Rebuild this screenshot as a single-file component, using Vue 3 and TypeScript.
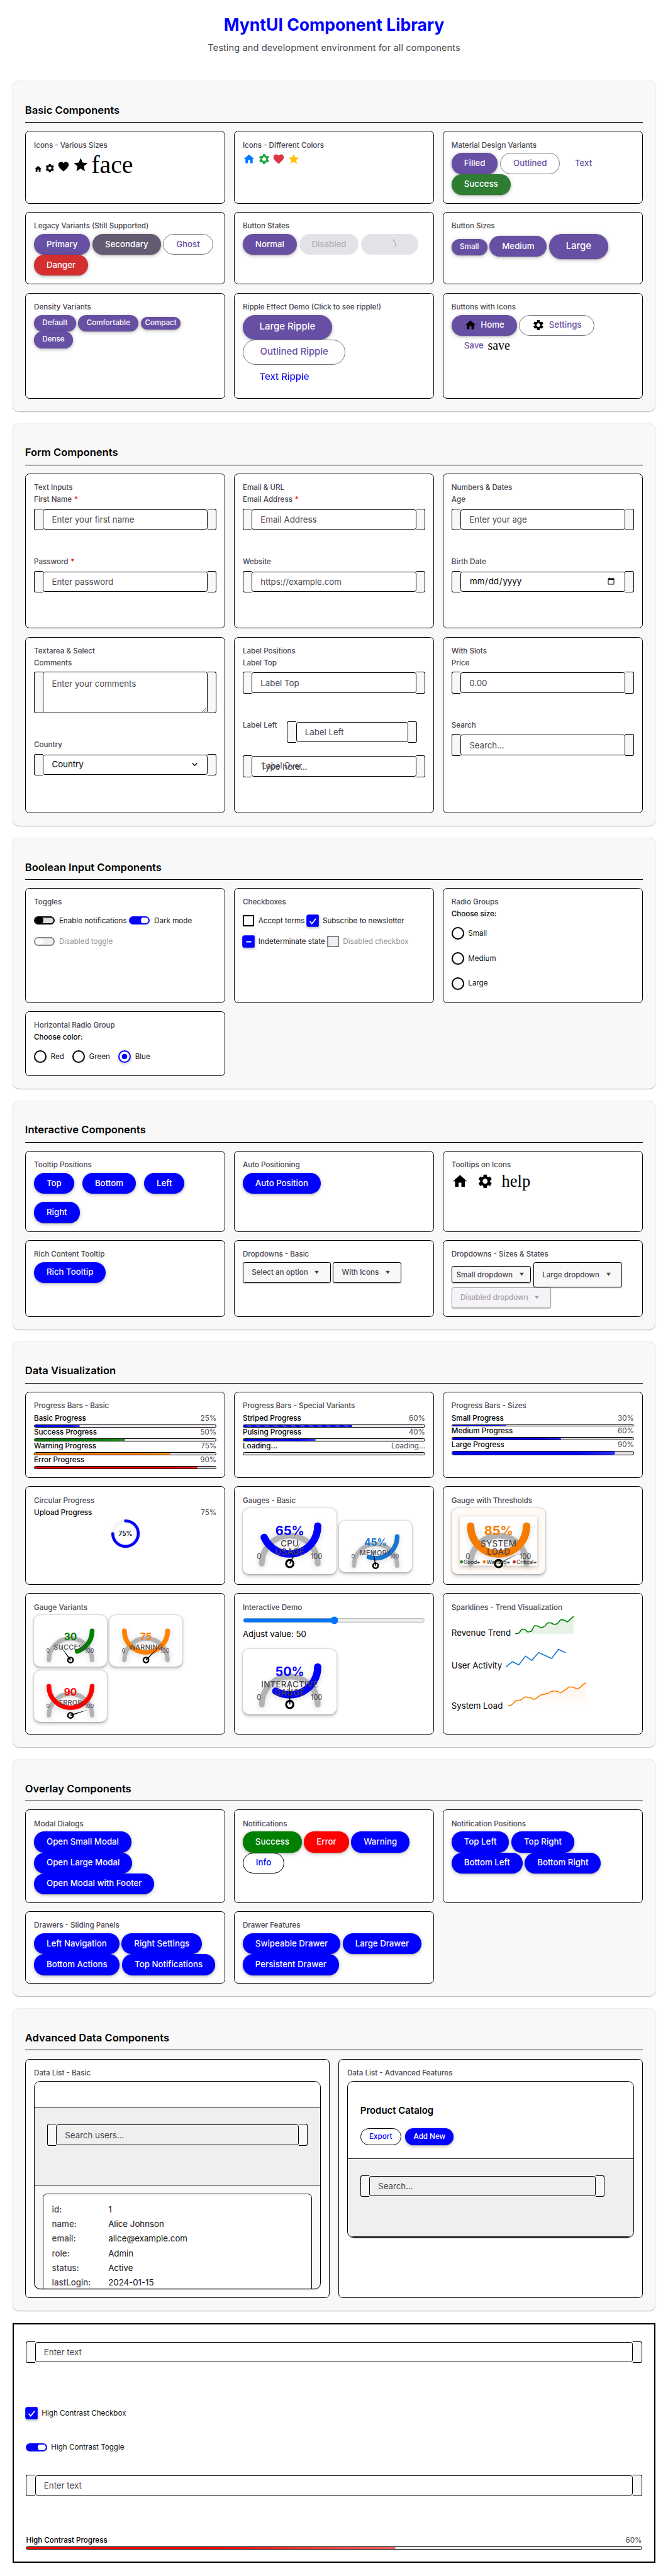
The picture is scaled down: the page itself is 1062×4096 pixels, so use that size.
<script setup lang="ts">
type Btn = { t: string; c?: string; s?: string; icon?: string; iconText?: string; spin?: boolean }
type Glyph = { n: string; s: number; c?: string; text?: boolean }
type Field = { label?: string; req?: boolean; ph?: string; kind?: string; mode?: string; over?: string }
type Check = { t: string; k: string; on?: boolean; mixed?: boolean; off?: boolean }
type Drop = { t: string; s?: string; off?: boolean }
type Bar = { t: string; v: string; w: number; c?: string; h?: number; striped?: boolean }
type Gauge = { lg?: boolean; pct: number; text: string; lines: string[]; c: string; legend?: boolean }
type Spark = { t: string; w: number; mt: number; h: number; c: string; pts: number[][]; fill?: string; curve?: boolean }
type Block = {
  glyphs?: Glyph[]; gap?: number; buttons?: Btn[][]; btnGap?: number; rowGap?: number; fields?: Field[]
  checks?: Check[][]; radios?: { legend: string; items: { t: string; on?: boolean }[]; row?: boolean }
  drops?: Drop[][]; bars?: Bar[]; ring?: number; gauges?: Gauge[][]; range?: number; sparks?: Spark[]
}
type Card = { title: string; blocks: Block[] }
type Section = { title: string; rows: number[]; cards: Card[] }

const paths: Record<string, string> = {
  home: 'M10 20v-6h4v6h5v-8h3L12 3 2 12h3v8z',
  settings:
    'M19.14 12.94c.04-.3.06-.61.06-.94 0-.32-.02-.64-.07-.94l2.03-1.58c.18-.14.23-.41.12-.61l-1.92-3.32c-.12-.22-.37-.29-.59-.22l-2.39.96c-.5-.38-1.03-.7-1.62-.94l-.36-2.54c-.04-.24-.24-.41-.48-.41h-3.84c-.24 0-.43.17-.47.41l-.36 2.54c-.59.24-1.13.57-1.62.94l-2.39-.96c-.22-.08-.47 0-.59.22L2.74 8.87c-.12.21-.08.47.12.61l2.03 1.58c-.05.3-.09.63-.09.94s.02.64.07.94l-2.03 1.58c-.18.14-.23.41-.12.61l1.92 3.32c.12.22.37.29.59.22l2.39-.96c.5.38 1.03.7 1.62.94l.36 2.54c.05.24.24.41.48.41h3.84c.24 0 .44-.17.47-.41l.36-2.54c.59-.24 1.13-.56 1.62-.94l2.39.96c.22.08.47 0 .59-.22l1.92-3.32c.12-.22.07-.47-.12-.61l-2.01-1.58zM12 15.6c-1.98 0-3.6-1.62-3.6-3.6s1.62-3.6 3.6-3.6 3.6 1.62 3.6 3.6-1.62 3.6-3.6 3.6z',
  heart:
    'M12 21.35l-1.45-1.32C5.4 15.36 2 12.28 2 8.5 2 5.42 4.42 3 7.5 3c1.74 0 3.41.81 4.5 2.09C13.09 3.81 14.76 3 16.5 3 19.58 3 22 5.42 22 8.5c0 3.78-3.4 6.86-8.55 11.54L12 21.35z',
  star: 'M12 17.27L18.18 21l-1.64-7.03L22 9.24l-7.19-.61L12 2 9.19 8.63 2 9.24l5.46 4.73L5.82 21z',
}

const sections: Section[] = [
  {
    title: 'Basic Components',
    rows: [139, 139, 203],
    cards: [
      { title: 'Icons - Various Sizes', blocks: [{ glyphs: [{ n: 'home', s: 16 }, { n: 'settings', s: 20 }, { n: 'heart', s: 24 }, { n: 'star', s: 32 }, { n: 'face', s: 48, text: true }] }] },
      { title: 'Icons - Different Colors', blocks: [{ glyphs: [{ n: 'home', s: 24, c: '#007bff' }, { n: 'settings', s: 24, c: '#28a745' }, { n: 'heart', s: 24, c: '#dc3545' }, { n: 'star', s: 24, c: '#ffc107' }] }] },
      { title: 'Material Design Variants', blocks: [{ buttons: [[{ t: 'Filled' }, { t: 'Outlined', c: 'outline' }, { t: 'Text', c: 'text' }], [{ t: 'Success', c: 'leaf' }]] }] },
      { title: 'Legacy Variants (Still Supported)', blocks: [{ buttons: [[{ t: 'Primary' }, { t: 'Secondary', c: 'slate' }, { t: 'Ghost', c: 'outline' }], [{ t: 'Danger', c: 'danger' }]] }] },
      { title: 'Button States', blocks: [{ buttons: [[{ t: 'Normal' }, { t: 'Disabled', c: 'off' }, { t: 'Loading', c: 'off', spin: true }]] }] },
      { title: 'Button Sizes', blocks: [{ buttons: [[{ t: 'Small', s: 'sm' }, { t: 'Medium' }, { t: 'Large', s: 'lg' }]] }] },
      { title: 'Density Variants', blocks: [{ buttons: [[{ t: 'Default', s: 'sm' }, { t: 'Comfortable', s: 'sm' }, { t: 'Compact', s: 'xs' }], [{ t: 'Dense', s: 'sm' }]] }] },
      { title: 'Ripple Effect Demo (Click to see ripple!)', blocks: [{ buttons: [[{ t: 'Large Ripple', s: 'lg' }], [{ t: 'Outlined Ripple', c: 'outline', s: 'lg' }], [{ t: 'Text Ripple', c: 'text fading', s: 'lg' }]] }] },
      { title: 'Buttons with Icons', blocks: [{ buttons: [[{ t: 'Home', icon: 'home' }, { t: 'Settings', c: 'outline', icon: 'settings' }], [{ t: 'Save', c: 'text', iconText: 'save' }]] }] },
    ],
  },
  {
    title: 'Form Components',
    rows: [297, 338],
    cards: [
      { title: 'Text Inputs', blocks: [{ fields: [{ label: 'First Name', req: true, ph: 'Enter your first name' }, { label: 'Password', req: true, ph: 'Enter password' }] }] },
      { title: 'Email & URL', blocks: [{ fields: [{ label: 'Email Address', req: true, ph: 'Email Address' }, { label: 'Website', ph: 'https://example.com' }] }] },
      { title: 'Numbers & Dates', blocks: [{ fields: [{ label: 'Age', ph: 'Enter your age' }, { label: 'Birth Date', kind: 'date' }] }] },
      { title: 'Textarea & Select', blocks: [{ fields: [{ label: 'Comments', ph: 'Enter your comments', kind: 'area' }, { label: 'Country', kind: 'select' }] }] },
      { title: 'Label Positions', blocks: [{ fields: [{ label: 'Label Top', ph: 'Label Top' }, { label: 'Label Left', ph: 'Label Left', mode: 'side' }, { ph: 'Type here...', over: 'Label Over' }] }] },
      { title: 'With Slots', blocks: [{ fields: [{ label: 'Price', ph: '0.00' }, { label: 'Search', ph: 'Search...' }] }] },
    ],
  },
  {
    title: 'Boolean Input Components',
    rows: [220, 124],
    cards: [
      { title: 'Toggles', blocks: [{ checks: [[{ k: 'toggle', t: 'Enable notifications' }, { k: 'toggle', t: 'Dark mode', on: true }], [{ k: 'toggle', t: 'Disabled toggle', off: true }]] }] },
      { title: 'Checkboxes', blocks: [{ checks: [[{ k: 'check', t: 'Accept terms' }, { k: 'check', t: 'Subscribe to newsletter', on: true }], [{ k: 'check', t: 'Indeterminate state', on: true, mixed: true }, { k: 'check', t: 'Disabled checkbox', off: true }]] }] },
      { title: 'Radio Groups', blocks: [{ radios: { legend: 'Choose size:', items: [{ t: 'Small' }, { t: 'Medium' }, { t: 'Large' }] } }] },
      { title: 'Horizontal Radio Group', blocks: [{ radios: { legend: 'Choose color:', row: true, items: [{ t: 'Red' }, { t: 'Green' }, { t: 'Blue', on: true }] } }] },
    ],
  },
  {
    title: 'Interactive Components',
    rows: [155, 147],
    cards: [
      { title: 'Tooltip Positions', blocks: [{ btnGap: 16, rowGap: 16, buttons: [[{ t: 'Top', c: 'blue' }, { t: 'Bottom', c: 'blue' }, { t: 'Left', c: 'blue' }], [{ t: 'Right', c: 'blue' }]] }] },
      { title: 'Auto Positioning', blocks: [{ buttons: [[{ t: 'Auto Position', c: 'blue' }]] }] },
      { title: 'Tooltips on Icons', blocks: [{ gap: 16, glyphs: [{ n: 'home', s: 32 }, { n: 'settings', s: 32 }, { n: 'help', s: 32, text: true }] }] },
      { title: 'Rich Content Tooltip', blocks: [{ buttons: [[{ t: 'Rich Tooltip', c: 'blue' }]] }] },
      { title: 'Dropdowns - Basic', blocks: [{ drops: [[{ t: 'Select an option' }, { t: 'With Icons' }]] }] },
      { title: 'Dropdowns - Sizes & States', blocks: [{ drops: [[{ t: 'Small dropdown', s: 'sm' }, { t: 'Large dropdown', s: 'lg' }], [{ t: 'Disabled dropdown', off: true }]] }] },
    ],
  },
  {
    title: 'Data Visualization',
    rows: [165.4, 189, 271],
    cards: [
      { title: 'Progress Bars - Basic', blocks: [{ bars: [{ t: 'Basic Progress', v: '25%', w: 25 }, { t: 'Success Progress', v: '50%', w: 50, c: 'green' }, { t: 'Warning Progress', v: '75%', w: 75, c: 'orange' }, { t: 'Error Progress', v: '90%', w: 90, c: 'red' }] }] },
      { title: 'Progress Bars - Special Variants', blocks: [{ bars: [{ t: 'Striped Progress', v: '60%', w: 60, striped: true }, { t: 'Pulsing Progress', v: '40%', w: 40 }, { t: 'Loading...', v: 'Loading...', w: 0 }] }] },
      { title: 'Progress Bars - Sizes', blocks: [{ bars: [{ t: 'Small Progress', v: '30%', w: 30, h: 4 }, { t: 'Medium Progress', v: '60%', w: 60 }, { t: 'Large Progress', v: '90%', w: 90, h: 8 }] }] },
      { title: 'Circular Progress', blocks: [{ ring: 75 }] },
      { title: 'Gauges - Basic', blocks: [{ gauges: [[{ lg: true, pct: 65, text: '65%', lines: ['CPU', 'USAGE'], c: '#0000ff' }, { pct: 45, text: '45%', lines: ['MEMORY'], c: '#1976d2' }]] }] },
      { title: 'Gauge with Thresholds', blocks: [{ gauges: [[{ lg: true, pct: 85, text: '85%', lines: ['SYSTEM', 'LOAD'], c: '#f57c00', legend: true }]] }] },
      { title: 'Gauge Variants', blocks: [{ gauges: [[{ pct: 30, text: '30', lines: ['SUCCESS'], c: '#008000' }, { pct: 75, text: '75', lines: ['WARNING'], c: '#ff8000' }], [{ pct: 90, text: '90', lines: ['ERROR'], c: '#ff0000' }]] }] },
      { title: 'Interactive Demo', blocks: [{ range: 50 }, { gauges: [[{ lg: true, pct: 50, text: '50%', lines: ['INTERACTIVE', 'GAUGE'], c: '#0000ff' }]] }] },
      {
        title: 'Sparklines - Trend Visualization',
        blocks: [{
          sparks: [
            { t: 'Revenue Trend', w: 121, mt: 22.3, h: 55, c: '#008000', fill: 'rgba(0,128,0,.1)', curve: true, pts: [[2, 36], [7, 35], [15, 27], [20, 28], [26, 32.5], [31, 31.5], [39, 20.5], [44, 21], [51.5, 24.5], [57, 22], [64, 15], [70, 15.2], [76, 18], [81, 17], [89, 9.2], [95.5, 9.6], [100.5, 13], [113, 3.5]] },
            { t: 'User Activity', w: 104, mt: 29.7, h: 65, c: '#1976d2', pts: [[1, 43.5], [13, 34], [25, 40], [38, 23.3], [50, 31.5], [63, 16.5], [76, 22.3], [88, 28], [101, 10.3], [114, 16.5]] },
            { t: 'System Load', w: 108, mt: 42.3, h: 85, c: '#ff8000', fill: 'url(#glow)', curve: true, pts: [[1, 53.3], [6, 52.3], [17, 43.3], [25, 42.3], [33, 36.7], [42, 37.3], [50, 41], [67, 31.7], [76, 30], [84, 25.7], [91, 25], [102, 28.3], [110, 23.3], [118, 17.3], [125, 17.7], [133, 21], [150, 10]] },
          ],
        }],
      },
    ],
  },
  {
    title: 'Overlay Components',
    rows: [179, 139],
    cards: [
      { title: 'Modal Dialogs', blocks: [{ buttons: [[{ t: 'Open Small Modal', c: 'blue' }], [{ t: 'Open Large Modal', c: 'blue' }], [{ t: 'Open Modal with Footer', c: 'blue' }]] }] },
      { title: 'Notifications', blocks: [{ buttons: [[{ t: 'Success', c: 'green' }, { t: 'Error', c: 'red' }, { t: 'Warning', c: 'blue' }], [{ t: 'Info', c: 'outline ink' }]] }] },
      { title: 'Notification Positions', blocks: [{ buttons: [[{ t: 'Top Left', c: 'blue' }, { t: 'Top Right', c: 'blue' }], [{ t: 'Bottom Left', c: 'blue' }, { t: 'Bottom Right', c: 'blue' }]] }] },
      { title: 'Drawers - Sliding Panels', blocks: [{ buttons: [[{ t: 'Left Navigation', c: 'blue' }, { t: 'Right Settings', c: 'blue' }], [{ t: 'Bottom Actions', c: 'blue' }, { t: 'Top Notifications', c: 'blue' }]] }] },
      { title: 'Drawer Features', blocks: [{ buttons: [[{ t: 'Swipeable Drawer', c: 'blue' }, { t: 'Large Drawer', c: 'blue' }], [{ t: 'Persistent Drawer', c: 'blue' }]] }] },
    ],
  },
]

const record: [string, string][] = [
  ['id', '1'], ['name', 'Alice Johnson'], ['email', 'alice@example.com'],
  ['role', 'Admin'], ['status', 'Active'], ['lastLogin', '2024-01-15'],
]

const large = { w: 180, h: 126.4, cx: 90, hub: 106.3, r: 53.6, sw: 11, vy: 34.3, vsw: 14, ty: 51.3, fs: 24, ly: [73.3, 89.3], lf: 16, ny: 97.8, n0: 31, n1: 141, nf: 13.5, hr: 7, hs: 3.8 }
const small = { w: 140, h: 98.4, cx: 70, hub: 86.2, r: 41.4, sw: 8.4, vy: 30.3, vsw: 9, ty: 48.8, fs: 18.7, ly: [66.5, 80], lf: 13, ny: 72.5, n0: 27, n1: 106, nf: 10.8, hr: 5, hs: 3 }
const dims = (g: Gauge) => (g.lg ? large : small)

function valueArc(g: Gauge): string {
  const d = dims(g)
  const a = (Math.min(180, g.pct * 2.4) * Math.PI) / 180
  return `M${d.cx + d.r} ${d.vy}A${d.r} ${d.r} 0 0 1 ${d.cx + d.r * Math.cos(a)} ${d.vy + d.r * Math.sin(a)}`
}
function baseArc(g: Gauge): string {
  const d = dims(g)
  return `M${d.cx - d.r} ${d.hub}A${d.r} ${d.r} 0 0 1 ${d.cx + d.r} ${d.hub}`
}
function line(s: Spark): string {
  if (!s.curve) return 'M' + s.pts.map((p) => p.join(' ')).join('L')
  let out = `M${s.pts[0].join(' ')}`
  for (let i = 1; i < s.pts.length; i++) {
    const [x0, y0] = s.pts[i - 1]
    const [x1, y1] = s.pts[i]
    const k = (x1 - x0) * 0.35
    out += `C${x0 + k} ${y0} ${x1 - k} ${y1} ${x1} ${y1}`
  }
  return out
}
function area(s: Spark): string {
  const base = s.fill === 'url(#glow)' ? 54 : 36
  return `${line(s)}V${base}H${s.pts[0][0]}Z`
}
</script>

<template>
  <div class="page">
    <header class="head">
      <h1>MyntUI Component Library</h1>
      <p>Testing and development environment for all components</p>
    </header>

    <section v-for="s in sections" :key="s.title" class="section">
      <h2>{{ s.title }}</h2>
      <div class="grid" :style="{ gridTemplateRows: s.rows.map((r) => r + 'px').join(' ') }">
        <article v-for="card in s.cards" :key="card.title" class="card">
          <h3>{{ card.title }}</h3>
          <template v-for="(b, bi) in card.blocks" :key="bi">
            <div v-if="b.glyphs" class="glyphs" :class="{ even: b.gap }" :style="{ gap: (b.gap ?? 4.5) + 'px' }">
              <template v-for="g in b.glyphs" :key="g.n">
                <span v-if="g.text" class="ligature" :style="{ fontSize: g.s + 'px' }">{{ g.n }}</span>
                <svg v-else :width="g.s" :height="g.s" viewBox="0 0 24 24" :fill="g.c ?? '#000'"><path :d="paths[g.n]" /></svg>
              </template>
            </div>

            <div v-if="b.buttons" class="stack" :style="{ gap: (b.rowGap ?? 0) + 'px' }">
              <div v-for="(row, ri) in b.buttons" :key="ri" class="line" :style="{ gap: (b.btnGap ?? 4.5) + 'px' }">
                <button v-for="x in row" :key="x.t" class="btn" :class="[x.c, x.s]">
                  <svg v-if="x.icon" width="24" height="24" viewBox="0 0 24 24" fill="#000"><path :d="paths[x.icon]" /></svg>
                  <span :class="{ hidden: x.spin }">{{ x.t }}</span>
                  <svg v-if="x.spin" class="spin" width="24" height="24" viewBox="0 0 24 24" fill="none"><path d="M17 2.5A10.5 10.5 0 0 1 21.6 16" stroke="#b5b3b8" stroke-width="2" /></svg>
                  <span v-if="x.iconText" class="ligature tail">{{ x.iconText }}</span>
                </button>
              </div>
            </div>

            <template v-if="b.fields">
              <div v-for="(f, fi) in b.fields" :key="fi" class="field" :class="f.mode">
                <label v-if="f.label">{{ f.label }}<i v-if="f.req"> *</i></label>
                <div class="box" :class="{ tall: f.kind === 'area' }">
                  <span class="cap l"></span>
                  <textarea v-if="f.kind === 'area'" class="ctl" :placeholder="f.ph"></textarea>
                  <select v-else-if="f.kind === 'select'" class="ctl"><option>Country</option></select>
                  <input v-else-if="f.kind === 'date'" type="date" class="ctl" />
                  <input v-else class="ctl" :placeholder="f.ph" />
                  <span class="cap r"></span>
                  <svg v-if="f.kind === 'select'" class="chevron" width="16" height="16" viewBox="0 0 16 16" fill="none"><path d="M3.5 5.5L8 10l4.500-4.500" stroke="#000" stroke-width="1.7" /></svg>
                  <span v-if="f.over" class="over">{{ f.over }}</span>
                </div>
              </div>
            </template>

            <template v-if="b.checks">
              <div v-for="(row, ri) in b.checks" :key="ri" class="checks">
                <div v-for="c in row" :key="c.t" class="item" :class="{ on: c.on, off: c.off }">
                  <span v-if="c.k === 'toggle'" class="toggle"><b></b></span>
                  <span v-else class="tick">
                    <svg v-if="c.on" width="18" height="18" viewBox="0 0 18 18" fill="none" stroke="#fff" stroke-width="2">
                      <path :d="c.mixed ? 'M4.5 9h9' : 'M3.5 9.5l3.6 4L14 5'" />
                    </svg>
                  </span>
                  <span>{{ c.t }}</span>
                </div>
              </div>
            </template>

            <div v-if="b.radios" class="radios" :class="{ row: b.radios.row }">
              <p>{{ b.radios.legend }}</p>
              <div class="group">
                <div v-for="r in b.radios.items" :key="r.t" class="item" :class="{ on: r.on }">
                  <span class="radio"></span><span>{{ r.t }}</span>
                </div>
              </div>
            </div>

            <template v-if="b.drops">
              <div v-for="(row, ri) in b.drops" :key="ri" class="line mid">
                <div v-for="d in row" :key="d.t" class="drop" :class="[d.s, { off: d.off }]">
                  <span>{{ d.t }}</span>
                  <svg width="18" height="8" viewBox="0 0 18 8"><path d="M5 1h8l-4 6z" fill="currentColor" /></svg>
                </div>
              </div>
            </template>

            <template v-if="b.bars">
              <div v-for="p in b.bars" :key="p.t" class="bar">
                <div class="cap-row"><b>{{ p.t }}</b><span>{{ p.v }}</span></div>
                <div class="track" :style="{ height: (p.h ?? 6) + 'px' }">
                  <div class="fill" :class="[p.c, { striped: p.striped }]" :style="{ width: p.w + '%' }"></div>
                </div>
              </div>
            </template>

            <div v-if="b.ring" class="bar">
              <div class="cap-row"><b>Upload Progress</b><span>{{ b.ring }}%</span></div>
              <svg class="ring" width="64" height="64" viewBox="0 0 64 64" fill="none">
                <circle cx="32" cy="32" r="24.5" stroke="#f3f3f6" stroke-width="5.5" />
                <path d="M32 7.5A24.5 24.5 0 1 1 7.5 32" stroke="#00f" stroke-width="5.5" stroke-linecap="round" />
                <text x="32" y="36" text-anchor="middle" font-size="12" font-weight="600">{{ b.ring }}%</text>
              </svg>
            </div>

            <template v-if="b.range">
              <input type="range" class="slider" :value="b.range" />
              <p class="adjust">Adjust value: {{ b.range }}</p>
            </template>

            <template v-if="b.gauges">
              <div v-for="(row, ri) in b.gauges" :key="ri" class="gauges">
                <div v-for="g in row" :key="g.text" class="gauge" :class="{ lg: g.lg, warm: g.legend }">
                  <svg :width="dims(g).w" :height="dims(g).h" :viewBox="`0 0 ${dims(g).w} ${dims(g).h}`" fill="none">
                    <rect v-if="g.legend" class="plate" x="16" y="16.3" width="148" height="94" fill="#fff" />
                    <g class="arcs">
                      <path :d="baseArc(g)" stroke="#b3b3b3" :stroke-width="dims(g).sw" stroke-linecap="round" />
                      <path :d="valueArc(g)" :stroke="g.c" :stroke-width="dims(g).vsw" stroke-linecap="round" />
                    </g>
                    <g v-if="g.legend" font-size="10.5" fill="#1c1b1f">
                      <circle cx="19" cy="103" r="3" fill="#2e7d32" /><text x="23" y="107" textLength="32">Good+</text>
                      <circle cx="62.5" cy="103" r="3" fill="#f57c00" /><text x="67" y="107" textLength="45">Warning+</text>
                      <circle cx="120" cy="103" r="3" fill="#c62828" /><text x="124.5" y="107" textLength="39">Critical+</text>
                    </g>
                    <circle :cx="dims(g).cx" :cy="dims(g).hub" :r="dims(g).hr" :fill="g.legend ? 'none' : '#fff'" stroke="#000" :stroke-width="dims(g).hs" />
                    <path
                      :d="`M${dims(g).cx - 1.2} ${dims(g).hub}h2.4L${dims(g).cx} ${dims(g).hub - dims(g).r * 0.88}z`"
                      :fill="g.legend ? '#555' : '#000'"
                      :transform="`rotate(${(g.pct - 50) * 1.8} ${dims(g).cx} ${dims(g).hub})`"
                    />
                    <g text-anchor="middle" fill="#49454f">
                      <text :x="dims(g).cx" :y="dims(g).ty" :font-size="dims(g).fs" font-weight="700" :fill="g.c">{{ g.text }}</text>
                      <text v-for="(l, li) in g.lines" :key="l" :x="dims(g).cx" :y="dims(g).ly[li]" :font-size="dims(g).lf" font-weight="500" letter-spacing=".4">{{ l }}</text>
                      <text :x="dims(g).n0" :y="dims(g).ny" :font-size="dims(g).nf">0</text>
                      <text :x="dims(g).n1" :y="dims(g).ny" :font-size="dims(g).nf">100</text>
                    </g>
                  </svg>
                </div>
              </div>
            </template>

            <template v-if="b.sparks">
              <div v-for="k in b.sparks" :key="k.t" class="spark" :style="{ height: k.h + 'px' }">
                <span :style="{ width: k.w + 'px', marginTop: k.mt + 'px' }">{{ k.t }}</span>
                <svg width="160" :height="k.h" fill="none">
                  <defs>
                    <linearGradient id="glow" x1="0" y1="0" x2="0" y2="1">
                      <stop offset="0" stop-color="#ff8000" stop-opacity=".1" /><stop offset="1" stop-color="#ff8000" stop-opacity="0" />
                    </linearGradient>
                  </defs>
                  <path v-if="k.fill" :d="area(k)" :fill="k.fill" />
                  <path :d="line(k)" :stroke="k.c" stroke-width="2" stroke-linecap="round" stroke-linejoin="round" />
                </svg>
              </div>
            </template>
          </template>
        </article>
      </div>
    </section>

    <section class="section">
      <h2>Advanced Data Components</h2>
      <div class="grid two">
        <article class="card">
          <h3>Data List - Basic</h3>
          <div class="list basic">
            <div class="top"></div>
            <div class="search">
              <div class="box"><span class="cap l"></span><input class="ctl" placeholder="Search users..." /><span class="cap r"></span></div>
            </div>
            <div class="body">
              <dl>
                <div v-for="[k, v] in record" :key="k"><dt>{{ k }}:</dt><dd>{{ v }}</dd></div>
              </dl>
            </div>
          </div>
        </article>
        <article class="card">
          <h3>Data List - Advanced Features</h3>
          <div class="list catalog">
            <div class="top">
              <h4>Product Catalog</h4>
              <div class="line tools">
                <button class="btn outline ink sm"><span>Export</span></button>
                <button class="btn blue sm"><span>Add New</span></button>
              </div>
            </div>
            <div class="search">
              <div class="box narrow"><span class="cap l"></span><input class="ctl" placeholder="Search..." /><span class="cap r"></span></div>
            </div>
          </div>
        </article>
      </div>
    </section>

    <section class="contrast">
      <div class="box"><span class="cap l"></span><input class="ctl" placeholder="Enter text" /><span class="cap r"></span></div>
      <div class="item on first">
        <span class="tick"><svg width="18" height="18" viewBox="0 0 18 18" fill="none" stroke="#fff" stroke-width="2"><path d="M3.5 9.5l3.6 4L14 5" /></svg></span>
        <span>High Contrast Checkbox</span>
      </div>
      <div class="item on second"><span class="toggle"><b></b></span><span>High Contrast Toggle</span></div>
      <div class="box"><span class="cap l"></span><input class="ctl" placeholder="Enter text" /><span class="cap r"></span></div>
      <div class="bar final">
        <div class="cap-row"><b>High Contrast Progress</b><span>60%</span></div>
        <div class="track"><div class="fill red long" style="width: 60%"></div></div>
      </div>
    </section>
  </div>
</template>

<style>
html,
body {
  margin: 0;
  background: #fff;
}
</style>

<style scoped>
.page {
  zoom: 0.8296875;
  width: 1280px;
  height: 4935px;
  box-sizing: border-box;
  padding: 24px 24px 0;
  font-family: Inter, 'Liberation Sans', sans-serif;
  font-size: 16px;
  color: #000;
  overflow: hidden;
}
.page * { box-sizing: border-box; }
h1, h2, h3, h4, p, dl, dd { margin: 0; }
.head { text-align: center; height: 131.6px; }
h1 { font-size: 32px; line-height: 48px; font-weight: 700; color: #00f; margin-bottom: 8px; }
.head p { font-size: 17.6px; line-height: 26.4px; letter-spacing: 0.12px; color: #49454f; }

.section {
  background: #f8f8f8;
  border-radius: 12px;
  padding: 24px;
  margin-bottom: 24px;
  box-shadow: 0 1px 2px rgba(0, 0, 0, 0.3);
}
h2 {
  margin: 16.6px 0 16px;
  height: 39px;
  padding-bottom: 8px;
  border-bottom: 1px solid #000;
  font-size: 20px;
  line-height: 30px;
  font-weight: 600;
}
.grid { display: grid; grid-template-columns: repeat(3, 1fr); gap: 16px; }
.grid.two { grid-template-columns: repeat(2, 1fr); grid-template-rows: 458.7px; }
.card {
  min-width: 0;
  padding: 16px;
  background: #fff;
  border: 1px solid #000;
  border-radius: 8px;
}
h3 { height: 25px; font-size: 14px; line-height: 21.6px; font-weight: 500; color: #49454f; white-space: nowrap; }

.glyphs { display: flex; align-items: baseline; }
.glyphs.even { align-items: center; }
.glyphs svg { display: block; flex: none; }
.ligature { font-family: 'Liberation Serif', serif; font-weight: 400; line-height: 1; color: #000; }

.stack { display: flex; flex-direction: column; }
.line { display: flex; align-items: baseline; gap: 4.5px; }
.line.mid { align-items: center; }
.btn {
  position: relative;
  display: inline-flex;
  align-items: center;
  justify-content: center;
  gap: 8px;
  flex: none;
  height: 40px;
  padding: 0 24px;
  border: 0;
  border-radius: 20px;
  background: #6750a4;
  color: #fff;
  font: 500 16px/24px Inter, 'Liberation Sans', sans-serif;
  white-space: nowrap;
  box-shadow: 0 1px 2px rgba(0, 0, 0, 0.3), 0 2px 6px 2px rgba(0, 0, 0, 0.15);
}
.btn.sm { height: 32px; padding: 0 16px; border-radius: 16px; font-size: 14px; }
.btn.xs { height: 24px; padding: 0 8px; border-radius: 12px; font-size: 14px; }
.btn.lg { height: 48px; padding: 0 32px; border-radius: 24px; font-size: 18px; }
.btn.slate { background: #625b71; }
.btn.danger { background: #d32f2f; }
.btn.leaf { background: #2e7d32; }
.btn.blue { background: #00f; }
.btn.green { background: #008000; }
.btn.red { background: #f00; }
.btn.outline { background: #fff; color: #6750a4; border: 1px solid #79747e; box-shadow: none; }
.btn.outline.ink { color: #00f; border-color: #000; }
.btn.text { background: none; color: #6750a4; box-shadow: none; }
.btn.off { background: #e4e2e6; color: #b3b0b6; box-shadow: none; }
.btn.fading span {
  color: transparent;
  background: linear-gradient(#6750a4 36%, #00f 36%);
  background-clip: text;
}
.hidden { visibility: hidden; }
.spin { position: absolute; left: calc(50% - 12px); top: 8px; }
.tail { font-size: 24px; }

.field { margin-bottom: 53px; }
.field label { display: block; font-size: 14px; line-height: 15px; font-weight: 500; color: #49454f; margin-bottom: 10px; white-space: nowrap; }
.field label i { font-style: normal; color: #f00; margin-left: 1px; }
.field.side { display: flex; align-items: flex-start; gap: 17px; margin-bottom: 24.7px; padding-right: 16px; }
.field.side label { width: 68px; margin: 0; }
.field.side .box { flex: 1; min-width: 0; }
.box { position: relative; display: flex; align-items: center; height: 41.3px; }
.box.tall { height: 79.3px; }
.box.tall .ctl { height: 79.3px; padding-top: 10px; }
.cap { flex: none; width: 17px; height: 100%; background: #f8f8f8; border: 1px solid #000; }
.cap.l { border-right: 0; border-radius: 4px 0 0 4px; }
.cap.r { border-left: 0; border-radius: 0 4px 4px 0; }
.ctl {
  flex: 1;
  min-width: 0;
  margin: 0;
  height: 39.3px;
  padding: 0 16px;
  border: 1px solid #000;
  border-radius: 4px;
  background: transparent;
  color: #000;
  font: 400 16px/24px Inter, 'Liberation Sans', sans-serif;
  outline: none;
}
select.ctl { appearance: none; }
.ctl::placeholder { color: #49454f; opacity: 1; }
.chevron { position: absolute; right: 34px; top: 12px; }
.over { position: absolute; left: 37px; top: 12px; font-size: 15px; line-height: 17px; color: #49454f; }

.checks { display: flex; gap: 4.5px; height: 40px; align-items: center; }
.item { display: flex; align-items: center; gap: 8px; font-size: 14px; line-height: 20px; white-space: nowrap; color: #111; }
.toggle {
  position: relative;
  width: 40px;
  height: 16px;
  border: 2.5px solid #000;
  border-radius: 8px;
  background: #e3dde5;
  box-shadow: inset 0 1px 2px rgba(0, 0, 0, 0.25);
  overflow: hidden;
}
.toggle b { position: absolute; left: 0; top: -1px; width: 16px; height: 13px; border-radius: 2px 8px 8px 2px; background: #000; }
.on .toggle { border-color: #00f; background: #00f; }
.on .toggle b { left: 20.5px; top: -1px; width: 15px; border-radius: 7px; background: #fff; }
.off { color: #8f8f8f; }
.off .toggle { border-color: #858585; background: #f1eef3; box-shadow: none; }
.off .toggle b { background: #fff; }
.tick { width: 22px; height: 22px; border: 2.5px solid #000; background: #fff; display: flex; align-items: center; justify-content: center; box-shadow: 0 1px 2px rgba(0, 0, 0, 0.2); }
.on .tick { border-color: #00f; background: #00f; border-radius: 4px 2px 2px 4px; transform: scale(1.09); box-shadow: 1px 2px 4px rgba(0, 0, 0, 0.25); }
.on .tick svg { flex: none; }
.off .tick { border-color: #858585; background: #f3eff4; box-shadow: none; }
.radios p { font-size: 14px; line-height: 15px; font-weight: 500; color: #000; margin-bottom: 9.4px; }
.group { display: flex; flex-direction: column; gap: 8px; }
.row .group { flex-direction: row; gap: 16px; }
.group .item { height: 40px; }
.radio { width: 24px; height: 24px; border: 2.5px solid #000; border-radius: 50%; background: #fff; box-shadow: 0 1px 2px rgba(0, 0, 0, 0.2); }
.on .radio { border-color: #00f; background: radial-gradient(circle, #00f 5px, #fff 5.6px); box-shadow: 0 2px 5px rgba(0, 0, 0, 0.25); }

.drop {
  display: flex;
  align-items: center;
  gap: 8px;
  height: 40px;
  padding: 0 16px;
  border: 1px solid #000;
  border-radius: 4px;
  background: #f8f8f8;
  color: #49454f;
  font-size: 14px;
  font-weight: 500;
  white-space: nowrap;
  box-shadow: 0 1px 2px rgba(0, 0, 0, 0.3);
}
.drop.sm { height: 32px; padding: 0 8px; }
.drop.lg { height: 48px; }
.drop.off { border-color: #a0a0a0; background: #f5f2f8; color: #a5a2a8; }

.cap-row { display: flex; justify-content: space-between; height: 16px; margin-bottom: 4.6px; font-size: 14px; line-height: 17px; }
.cap-row b { font-weight: 500; }
.cap-row span { color: #49454f; }
.track { height: 6px; border: 1px solid #000; border-radius: 4px; background: #e6e0e9; overflow: hidden; }
.fill { height: 100%; border-radius: 0 3px 3px 0; background: linear-gradient(90deg, #00f 75%, #33f); }
.fill.green { background: linear-gradient(90deg, #008000 75%, #228b22); }
.fill.orange { background: linear-gradient(90deg, #ff8000 75%, #ffa033); }
.fill.red { background: linear-gradient(90deg, #f00 75%, #ff2a2a); }
.fill.red.long { background: linear-gradient(90deg, #f00 50%, #ff5c5c); }
.fill.striped { background: repeating-linear-gradient(45deg, #00f 0 6px, #33f 6px 12px); }
.ring { display: block; margin: -4px auto 0; }
.ring circle, .ring path { filter: drop-shadow(0 1px 1px rgba(0, 0, 0, 0.08)); }
.ring text { fill: #000; }

.slider { display: block; width: 350px; height: 16px; margin: 2px 0 0; }
.adjust { margin: 6.7px 0 15.3px; line-height: 24px; }
.gauges { display: flex; align-items: flex-end; gap: 4.5px; }
.gauges + .gauges { margin-top: 7.3px; }
.gauge { flex: none; width: 140px; height: 98.4px; border-radius: 12px; background: #fff; box-shadow: 0 1px 3px rgba(0, 0, 0, 0.3), 0 3px 6px 1px rgba(0, 0, 0, 0.15); }
.gauge.lg { width: 180px; height: 126.4px; }
.gauge.lg + .gauge { margin-bottom: 4.2px; }
.gauge.warm { background: #fffaf6; }
.plate { filter: drop-shadow(0 2px 4px rgba(60, 40, 20, 0.3)); }
.gauge svg { display: block; }
.arcs { filter: drop-shadow(0 2px 5px rgba(0, 0, 0, 0.15)); }
.spark { display: flex; align-items: flex-start; }
.spark span { line-height: 24px; flex: none; }

.list { position: relative; border: 1px solid #000; border-radius: 12px; background: #f8f8f8; overflow: hidden; box-shadow: 0 1px 2px rgba(0, 0, 0, 0.3); }
.list.basic { height: 399.7px; }
.basic .top { height: 48.7px; background: #fff; }
.list .search { height: 151px; padding: 32px 24px 0; background: #efefef; border-top: 1px solid #000; border-bottom: 1px solid #000; }
.body { padding: 16px; }
dl { height: 240px; padding: 15px 16px; border: 1px solid #000; border-radius: 8px; background: #fff; }
dl div { display: flex; height: 28px; line-height: 28px; }
dt { width: 108px; font-weight: 500; color: #49454f; }
dd { color: #111; }
.catalog .top { height: 147px; padding: 43px 24px 0; background: #fff; }
h4 { font-size: 18px; line-height: 28px; font-weight: 600; }
.tools { gap: 8px; margin-top: 19px; }
.box.narrow { width: 468px; }

.contrast { height: 459px; padding: 32.3px 23.6px 0; border: 2.5px solid #000; background: #fff; }
.item.first { margin-top: 84.5px; height: 24px; }
.item.second { margin-top: 44px; height: 20px; }
.contrast .second + .box { margin-top: 42px; }
.bar.final { margin-top: 76px; }
.final .track { background: #e6e6e6; }
</style>
